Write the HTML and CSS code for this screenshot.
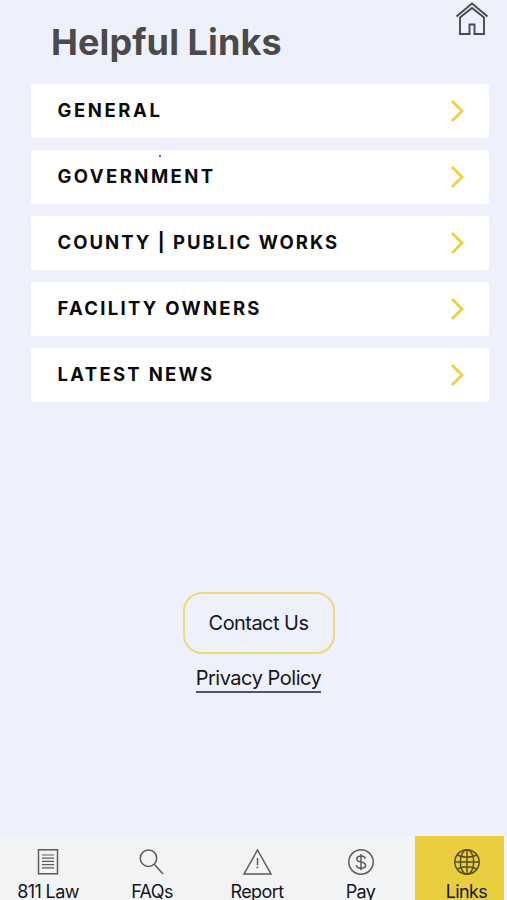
FILE: index.html
```html
<!DOCTYPE html>
<html lang="en">
<head>
    <meta charset="UTF-8">
    <meta name="viewport" content="width=device-width, initial-scale=1.0">
    <title>Helpful Links</title>
    <link rel="stylesheet" href="styles.css">
</head>
<body>
    <header class="header">
        <h1>Helpful Links</h1>
        <a class="home" href="#" aria-label="Home">
            <svg width="34" height="34" viewBox="0 0 34 34">
                <path d="M1.5 15.5 17 2.5l15.5 13M5 16.5V33h9.5v-9.5h5V33H29V16.5L17 7z"/>
            </svg>
        </a>
    </header>

    <main class="links">
        <a class="link general" href="#"><span>GENERAL</span><svg class="arrow" viewBox="0 0 14 24"><path d="M2 2l10 10L2 22"/></svg></a>
        <a class="link government" href="#"><span>GOVERNMENT</span><svg class="arrow" viewBox="0 0 14 24"><path d="M2 2l10 10L2 22"/></svg><i class="dot"></i></a>
        <a class="link county" href="#"><span>COUNTY | PUBLIC WORKS</span><svg class="arrow" viewBox="0 0 14 24"><path d="M2 2l10 10L2 22"/></svg></a>
        <a class="link" href="#"><span>FACILITY OWNERS</span><svg class="arrow" viewBox="0 0 14 24"><path d="M2 2l10 10L2 22"/></svg></a>
        <a class="link" href="#"><span>LATEST NEWS</span><svg class="arrow" viewBox="0 0 14 24"><path d="M2 2l10 10L2 22"/></svg></a>
    </main>

    <section class="contact">
        <a class="contact-btn" href="#">Contact Us</a>
        <a class="privacy" href="#">Privacy Policy</a>
    </section>

    <nav class="tabbar">
        <a class="tab" href="#">
            <svg width="28" height="28" viewBox="0 0 28 28">
                <path d="M4.5 1.8h19v24h-19z"/>
                <path class="thin" d="M8 7h12M8 10.2h12M8 13.4h12M8 16.6h12M8 19.8h12"/>
            </svg>
            <span>811 Law</span>
        </a>
        <a class="tab" href="#">
            <svg width="28" height="28" viewBox="0 0 28 28">
                <circle cx="10.5" cy="10.2" r="8.2"/>
                <path d="M16.5 16.5 25 26"/>
            </svg>
            <span>FAQs</span>
        </a>
        <a class="tab" href="#">
            <svg width="30" height="28" viewBox="0 0 30 28">
                <path d="M15.5 2 29 26H2z"/>
                <path d="M15.5 10v7M15.5 18.4v1.8"/>
            </svg>
            <span>Report</span>
        </a>
        <a class="tab" href="#">
            <svg width="28" height="28" viewBox="0 0 28 28">
                <circle cx="14" cy="14" r="12.2"/>
                <path d="M18.3 10.8c-.3-1.8-1.9-2.8-4.3-2.8s-4.2 1-4.2 2.9c0 4.3 8.8 1.8 8.8 6.3 0 1.9-1.9 3-4.5 3s-4.5-1.1-4.7-3.2M14 6v16.2"/>
            </svg>
            <span>Pay</span>
        </a>
        <a class="tab active" href="#">
            <svg width="28" height="28" viewBox="0 0 28 28">
                <circle cx="14" cy="14" r="12.2"/>
                <ellipse cx="14" cy="14" rx="6.7" ry="12.2"/>
                <path d="M14 1.8v24.4M1.8 14h24.4M4 7q10 4.4 20 0M4 21q10-4.4 20 0"/>
            </svg>
            <span>Links</span>
        </a>
    </nav>
</body>
</html>
```
FILE: styles.css
```css
* {
    box-sizing: border-box;
}

body {
    margin: 0;
    height: 900px;
    display: flex;
    flex-direction: column;
    background-color: #eef1fb;
    font-family: Inter, "Liberation Sans", sans-serif;
    color: #14161c;
    overflow: hidden;
}

a {
    color: inherit;
    text-decoration: none;
}

svg {
    display: block;
    fill: none;
    stroke: #4a4a4d;
    stroke-width: 1.9;
}

.header {
    display: flex;
    justify-content: space-between;
    height: 84px;
    padding: 1px 18px 0 51px;
}

h1 {
    margin: 18px 0 0;
    font-size: 36px;
    line-height: 46px;
    font-weight: 700;
    letter-spacing: 0.1px;
    color: #4b4a4a;
    white-space: nowrap;
}

.links {
    display: flex;
    flex-direction: column;
    gap: 12px;
    padding: 0 18px 0 31px;
}

.link {
    position: relative;
    display: flex;
    align-items: center;
    justify-content: space-between;
    height: 54px;
    padding: 0 25px 2px 26.5px;
    border-radius: 3px;
    background-color: #fff;
    color: #0b0b0d;
    font-size: 18.5px;
    font-weight: 700;
    letter-spacing: 2.3px;
    white-space: nowrap;
}

.general {
    letter-spacing: 2.6px;
}

.government {
    letter-spacing: 2.45px;
}

.county {
    letter-spacing: 2.03px;
}

.arrow {
    width: 14px;
    height: 24px;
    margin-top: 2px;
    stroke: #ebcf3c;
    stroke-width: 2.8;
}

.dot {
    position: absolute;
    left: 128px;
    top: 5px;
    width: 2px;
    height: 2px;
    background-color: #5a5ae0;
}

.contact {
    display: flex;
    flex-direction: column;
    align-items: center;
    margin-top: 190px;
    padding-left: 10px;
}

.contact-btn {
    display: flex;
    align-items: center;
    justify-content: center;
    width: 152px;
    height: 62px;
    border: 2px solid #edd979;
    border-radius: 19px;
    font-size: 20px;
    letter-spacing: -0.55px;
}

.privacy {
    margin-top: 11px;
    border-bottom: 2px solid #55565c;
    font-size: 20px;
    line-height: 26px;
    letter-spacing: -0.48px;
}

.tabbar {
    display: grid;
    grid-template-columns: 96px 112px 98px 109px 89px;
    height: 64px;
    margin-top: auto;
    background-color: #f1f3f5;
}

.tab {
    display: flex;
    flex-direction: column;
    align-items: center;
    padding-top: 12px;
    font-size: 18px;
    line-height: 24px;
    letter-spacing: -0.6px;
    white-space: nowrap;
}

.tab svg {
    stroke: #5c5c5e;
    stroke-width: 1.5;
}

.tab .thin {
    stroke-width: 1.2;
}

.tab span {
    margin-top: 4px;
}

.tab.active {
    padding-left: 14px;
    background-color: #e9cf3d;
}

.tab.active svg {
    stroke: #5a501f;
}
```
